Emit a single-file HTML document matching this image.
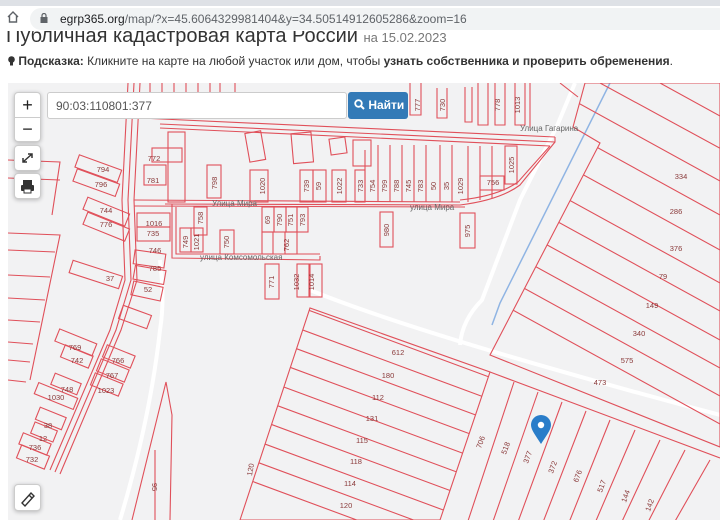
<!DOCTYPE html>
<html><head><meta charset="utf-8"><style>
*{margin:0;padding:0;box-sizing:border-box}
html,body{width:720px;height:520px;overflow:hidden}
body{background:#fff;font-family:"Liberation Sans",sans-serif;position:relative}
.top{position:absolute;left:0;top:0;width:720px;height:6px;background:#dee1e6;z-index:3}
.url{position:absolute;left:0;top:6px;width:720px;height:25px;background:#fff;z-index:2}
.urlbox{position:absolute;left:30px;top:2px;width:700px;height:22px;background:#f1f3f4;border-radius:11px}
.urltext{position:absolute;left:60px;top:12px;font-size:12px;color:#202124;z-index:3}
.urltext span{color:#5f6368}
h1{position:absolute;left:6px;top:25px;font-weight:normal;font-size:20px;color:#333;white-space:nowrap}
h1 small{font-size:13px;color:#777}
.hint{position:absolute;left:8px;top:54px;font-size:12px;color:#333;white-space:nowrap}
.map{position:absolute;left:8px;top:83px;width:712px;height:437px;background:#f2f2f3;overflow:hidden}
.btn{position:absolute;background:#fff;border:1px solid #ccc;border-radius:4px;box-shadow:0 1px 4px rgba(0,0,0,.25)}
.inp{position:absolute;left:39px;top:9px;width:300px;height:27px;background:#fff;border:1px solid #ccc;border-radius:3px;font-size:12px;color:#555;padding:6px 0 0 8px}
.go{position:absolute;left:340px;top:9px;width:60px;height:27px;background:#337ab7;border-radius:3px;color:#fff;font-size:12px;padding:6px 0 0 6px;font-weight:bold;white-space:nowrap}
svg text{font-family:"Liberation Sans",sans-serif}
</style></head><body>
<div class="top"></div>
<div class="url"><div class="urlbox"></div>
<svg style="position:absolute;left:6px;top:4px" width="14" height="14" viewBox="0 0 14 14"><path d="M2 7 L7 2 L12 7 M3.5 6 V12 H10.5 V6" fill="none" stroke="#5f6368" stroke-width="1.4"/></svg>
<svg style="position:absolute;left:40px;top:7px" width="8" height="10"><rect x="0.5" y="4" width="7" height="6" fill="#5f6368"/><path d="M2 4V2.5a2 2 0 0 1 4 0V4" fill="none" stroke="#5f6368" stroke-width="1.2"/></svg>
</div>
<div class="urltext">egrp365.org<span>/map/?x=45.6064329981404&amp;y=34.50514912605286&amp;zoom=16</span></div>
<h1>Публичная кадастровая карта России <small>на 15.02.2023</small></h1>
<div class="hint"><svg width="7" height="10" style="vertical-align:-1px"><circle cx="3.5" cy="3.5" r="3.3" fill="#333"/><rect x="2" y="6" width="3" height="3.5" fill="#333"/></svg> <b>Подсказка:</b> Кликните на карте на любой участок или дом, чтобы <b>узнать собственника и проверить обременения</b>.</div>
<div class="map">
<svg width="712" height="437" viewBox="8 83 712 437" style="position:absolute;left:0;top:0;display:block">
<defs>
<clipPath id="ce"><polygon points="585,83 720,83 720,447 490,355 600,143 573,127"/></clipPath>
<clipPath id="cs"><polygon points="240,520 310,308 490,372 440,520"/></clipPath>
<clipPath id="cr"><polygon points="490,372 720,458 720,520 440,520"/></clipPath>
</defs>
<g fill="none" stroke="#fff" stroke-width="4">
<path d="M120 520 Q150 420 160 330 Q165 300 160 260"/>
<path d="M310 290 Q420 335 720 415"/>
<path d="M460 345 Q462 320 482 300 L520 200 L557 126 L575 83"/>
</g>
<path d="M610 83 L500 303 L492 325" stroke="#8fb4e3" stroke-width="1.5" fill="none"/>
<g fill="none" stroke="#e0505a" stroke-width="1.1">
<path d="M128 83 L122 200 L125 280 L110 330 L50 470"/>
<path d="M134 83 L128 200 L131 280 L116 330 L55 472"/>
<path d="M140 83 L134 200 L137 280 L121 330 L60 474"/>
<path d="M140 118 L555 137"/><path d="M160 124 L555 142"/><path d="M160 128 L550 146"/>
<path d="M555 137 L555 142 L520 185 Q500 200 460 205 L165 204"/>
<path d="M550 146 L518 182 Q498 196 460 200"/>
<path d="M134 200 L460 202"/><path d="M134 206 L465 207"/>
<path d="M172 204 L172 258 L320 260 L320 256"/><path d="M176 207 L176 254 L320 254"/>
<path d="M150 83 V100 M162 83 V100 M174 83 V100 M186 83 V100 M198 83 V100 M210 83 V100 M220 83 V98 H235 V83"/>
<path d="M410 83 V115 H421 V83 M437 88 V118 H447 V88 M465 87 V122 H472 V87 M478 83 V125 H488 V83 M495 83 V125 H505 V83 M515 83 V125 H525 V83 M530 83 V128"/>
<rect x="168" y="132" width="17" height="70"/><rect x="152" y="148" width="30" height="14"/><rect x="144" y="165" width="22" height="20"/>
<rect x="207" y="165" width="14" height="33"/><rect x="250" y="170" width="18" height="32"/>
<rect x="247" y="132" width="16" height="29" transform="rotate(-10 255 145)"/>
<rect x="292" y="133" width="20" height="30" transform="rotate(-5 300 145)"/>
<rect x="330" y="138" width="16" height="16" transform="rotate(-8 338 146)"/>
<rect x="353" y="140" width="18" height="26"/><rect x="300" y="170" width="13" height="32"/><rect x="313" y="170" width="13" height="32"/>
<rect x="332" y="170" width="14" height="32"/><rect x="355" y="170" width="10" height="32"/>
<path d="M365 150 V202 M378 145 V202 M390 145 V202 M402 145 V202 M414 145 V202 M426 145 V202 M440 145 V202 M452 145 V202 M468 146 V202 M480 146 V200 M492 146 V198"/>
<rect x="480" y="176" width="24" height="14"/><rect x="505" y="146" width="12" height="38"/>
<rect x="194" y="207" width="13" height="28"/><rect x="180" y="228" width="11" height="24"/><rect x="191" y="228" width="12" height="24"/><rect x="220" y="230" width="14" height="24"/>
<rect x="262" y="207" width="12" height="25"/><rect x="274" y="207" width="12" height="25"/><rect x="286" y="207" width="11" height="25"/><rect x="297" y="207" width="11" height="25"/>
<rect x="262" y="232" width="11" height="22"/><rect x="285" y="232" width="12" height="22"/>
<rect x="265" y="264" width="14" height="35"/><rect x="297" y="264" width="12" height="33"/><rect x="310" y="264" width="12" height="33"/>
<rect x="380" y="212" width="13" height="35"/><rect x="460" y="213" width="15" height="35"/>
<rect x="76" y="162" width="45" height="13" transform="rotate(20 98 168)"/><rect x="74" y="176" width="45" height="13" transform="rotate(20 96 182)"/>
<rect x="84" y="205" width="45" height="13" transform="rotate(22 106 211)"/><rect x="84" y="220" width="45" height="13" transform="rotate(22 106 226)"/>
<rect x="137" y="213" width="33" height="14"/><rect x="137" y="227" width="33" height="14"/>
<rect x="134" y="252" width="31" height="14" transform="rotate(8 150 259)"/><rect x="134" y="268" width="31" height="14" transform="rotate(10 150 275)"/><rect x="132" y="284" width="30" height="14" transform="rotate(12 147 291)"/>
<rect x="70" y="268" width="52" height="13" transform="rotate(18 96 274)"/>
<rect x="120" y="310" width="30" height="14" transform="rotate(20 135 317)"/>
<rect x="56" y="336" width="40" height="13" transform="rotate(22 76 342)"/><rect x="62" y="350" width="30" height="13" transform="rotate(22 77 356)"/>
<rect x="104" y="350" width="30" height="13" transform="rotate(22 119 356)"/><rect x="98" y="364" width="30" height="13" transform="rotate(22 113 370)"/><rect x="92" y="378" width="30" height="13" transform="rotate(22 107 384)"/>
<rect x="52" y="378" width="28" height="12" transform="rotate(22 66 384)"/><rect x="35" y="390" width="42" height="12" transform="rotate(22 56 396)"/>
<rect x="37" y="412" width="28" height="13" transform="rotate(22 51 418)"/><rect x="32" y="426" width="24" height="12" transform="rotate(22 44 432)"/><rect x="20" y="438" width="30" height="12" transform="rotate(22 35 444)"/><rect x="18" y="450" width="30" height="14" transform="rotate(22 33 457)"/>
<path d="M8 160 L60 162 L52 215 M8 178 L60 180 M8 233 L60 235 L30 380 M8 250 L55 252 M8 275 L50 277 M8 298 L45 300 M8 320 L40 322 M8 342 L33 344 M8 360 L30 362 M8 380 L26 382"/>
<path d="M132 520 L166 382 L172 415 L170 520 M155 520 L155 450"/>
<polygon points="240,520 310,308 490,372 440,520"/>
<path d="M490 372 L720 458"/>
<polygon points="585,83 720,83 720,447 490,355 600,143 573,127"/>
<path d="M560 83 L578 97"/>
</g>
<g fill="none" stroke="#e0505a" stroke-width="1.1" clip-path="url(#cs)">
<path d="M200 270 L600 418 M200 292 L600 440 M200 313 L600 461 M200 334 L600 482 M200 356 L600 504 M200 377 L600 525 M200 398 L600 546 M200 420 L600 568 M200 441 L600 589 M200 462 L600 610"/>
</g>
<g fill="none" stroke="#e0505a" stroke-width="1.1" clip-path="url(#cr)">
<path d="M514 382 L465 530 M538 392 L490 530 M562 402 L515 530 M586 411 L540 530 M610 420 L566 530 M635 430 L592 530 M660 440 L618 530 M685 450 L644 530 M710 460 L670 530"/>
</g>
<g fill="none" stroke="#e0505a" stroke-width="1.1" clip-path="url(#ce)">
<path d="M500 60 L760 203 M500 94 L760 237 M500 129 L760 272 M500 162 L760 305 M500 190 L760 333 M500 219 L760 362 M500 247 L760 390 M500 275 L760 418 M500 303 L760 446 M600 83 L760 170 M660 83 L760 138"/>
</g>
<g font-size="7.5" fill="#8a3a3a" text-anchor="middle">
<text x="398" y="355">612</text><text x="388" y="378">180</text><text x="378" y="400">112</text><text x="372" y="421">131</text><text x="362" y="443">115</text><text x="356" y="464">118</text><text x="350" y="486">114</text><text x="346" y="508">120</text>
<text x="627" y="363">575</text><text x="600" y="385">473</text><text x="639" y="336">340</text><text x="652" y="308">149</text><text x="663" y="279">79</text><text x="676" y="251">376</text><text x="676" y="214">286</text><text x="681" y="179">334</text>
<text x="155" y="253">746</text><text x="155" y="271">785</text><text x="148" y="292">52</text><text x="154" y="226">1016</text><text x="153" y="236">735</text>
<text x="110" y="281">37</text><text x="103" y="172">794</text><text x="101" y="187">796</text><text x="106" y="213">744</text><text x="106" y="227">776</text>
<text x="75" y="350">769</text><text x="77" y="363">742</text><text x="118" y="363">766</text><text x="112" y="378">767</text><text x="106" y="393">1023</text><text x="67" y="392">748</text><text x="56" y="400">1030</text>
<text x="48" y="428">38</text><text x="43" y="441">12</text><text x="35" y="450">736</text><text x="32" y="462">732</text>
<text x="154" y="161">772</text><text x="153" y="183">781</text><text x="493" y="185">756</text>
</g>
<g font-size="7.5" fill="#8a3a3a" text-anchor="middle">
<text transform="translate(217 183) rotate(-90)">798</text><text transform="translate(265 186) rotate(-90)">1020</text><text transform="translate(309 186) rotate(-90)">739</text><text transform="translate(321 186) rotate(-90)">59</text><text transform="translate(342 186) rotate(-90)">1022</text><text transform="translate(363 186) rotate(-90)">733</text><text transform="translate(375 186) rotate(-90)">754</text><text transform="translate(387 186) rotate(-90)">799</text><text transform="translate(399 186) rotate(-90)">788</text><text transform="translate(411 186) rotate(-90)">745</text><text transform="translate(423 186) rotate(-90)">783</text><text transform="translate(436 186) rotate(-90)">50</text><text transform="translate(449 186) rotate(-90)">35</text><text transform="translate(463 186) rotate(-90)">1029</text><text transform="translate(514 165) rotate(-90)">1025</text>
<text transform="translate(203 218) rotate(-90)">758</text><text transform="translate(188 242) rotate(-90)">749</text><text transform="translate(199 242) rotate(-90)">1021</text><text transform="translate(229 242) rotate(-90)">750</text><text transform="translate(270 220) rotate(-90)">69</text><text transform="translate(282 220) rotate(-90)">790</text><text transform="translate(293 220) rotate(-90)">751</text><text transform="translate(305 220) rotate(-90)">793</text><text transform="translate(289 245) rotate(-90)">762</text><text transform="translate(274 282) rotate(-90)">771</text><text transform="translate(299 282) rotate(-90)">1032</text><text transform="translate(314 282) rotate(-90)">1014</text>
<text transform="translate(389 230) rotate(-90)">980</text><text transform="translate(470 231) rotate(-90)">975</text><text transform="translate(420 105) rotate(-90)">777</text><text transform="translate(445 105) rotate(-90)">730</text><text transform="translate(500 105) rotate(-90)">778</text><text transform="translate(520 105) rotate(-90)">1013</text>
<text transform="translate(483 443) rotate(-70)">706</text><text transform="translate(508 449) rotate(-70)">518</text><text transform="translate(530 458) rotate(-70)">377</text><text transform="translate(555 468) rotate(-70)">372</text><text transform="translate(580 477) rotate(-70)">676</text><text transform="translate(604 487) rotate(-70)">517</text><text transform="translate(628 497) rotate(-70)">144</text><text transform="translate(652 506) rotate(-70)">142</text>
<text transform="translate(152 487) rotate(90)">95</text><text transform="translate(253 470) rotate(-80)">120</text>
</g>
<g font-size="8" fill="#666"><text x="212" y="206">Улица Мира</text><text x="200" y="260">улица Комсомольская</text><text x="410" y="210">улица Мира</text><text x="520" y="131">Улица Гагарина</text></g>
<path d="M541 444 C536 436 531 430 531 425 A10 10 0 0 1 551 425 C551 430 546 436 541 444Z" fill="#2a7dc9"/><circle cx="541" cy="425" r="3.2" fill="#fff"/>
</svg>
<div class="btn" style="left:6px;top:9px;width:27px;height:50px"><div style="font-size:18px;text-align:center;line-height:24px;border-bottom:1px solid #ccc;color:#222">+</div><div style="font-size:18px;text-align:center;line-height:22px;color:#222">−</div></div>
<div class="inp">90:03:110801:377</div>
<div class="go"><svg width="11" height="11" style="vertical-align:-1px"><circle cx="4.5" cy="4.5" r="3.3" fill="none" stroke="#fff" stroke-width="1.8"/><path d="M7 7 L10 10" stroke="#fff" stroke-width="2"/></svg> Найти</div>
<div class="btn" style="left:6px;top:62px;width:27px;height:26px"><svg width="25" height="24"><path d="M8 16 L17 8 M13 8 H17 V12 M8 12 V16 H12" stroke="#333" stroke-width="1.5" fill="none"/></svg></div>
<div class="btn" style="left:6px;top:90px;width:27px;height:26px"><svg width="25" height="24"><rect x="8" y="6" width="9" height="5" fill="#333"/><rect x="6" y="11" width="13" height="6" rx="1" fill="#333"/><rect x="9" y="15" width="7" height="4" fill="#fff" stroke="#333"/></svg></div>
<div class="btn" style="left:6px;top:401px;width:27px;height:27px"><svg width="25" height="25"><path d="M7 18 L16 8 L19 11 L10 21 Z M14 10 L17 13" stroke="#333" stroke-width="1.4" fill="none"/></svg></div>
</div>
</body></html>
